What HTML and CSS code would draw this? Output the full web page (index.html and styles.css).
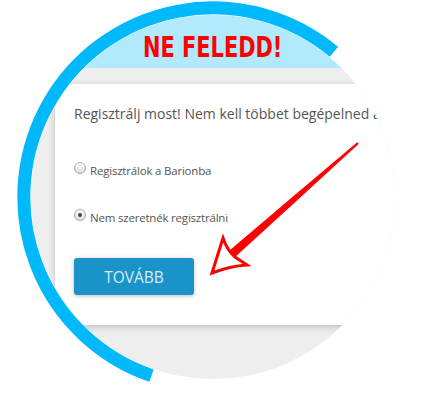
FILE: index.html
```html
<!DOCTYPE html>
<html lang="hu">
<head>
    <meta charset="UTF-8">
    <meta name="viewport" content="width=device-width, initial-scale=1.0">
    <title>Ne feledd!</title>
    <link rel="stylesheet" href="styles.css">
</head>
<body>
    <div class="stage">
        <div class="bubble">
            <div class="bubble-head"><span class="title">NE FELEDD!</span></div>
            <div class="card">
                <p class="intro">Regisztrálj most! Nem kell többet begépelned a</p>
                <label class="choice first">
                    <input type="radio" name="reg" value="yes">
                    <span>Regisztrálok a Barionba</span>
                </label>
                <label class="choice second">
                    <input type="radio" name="reg" value="no" checked>
                    <span>Nem szeretnék regisztrálni</span>
                </label>
                <button class="next-button" type="button">TOVÁBB</button>
            </div>
        </div>

        <!-- ring and hand drawn arrow sit over the bubble -->
        <svg class="overlay" width="428" height="400" viewBox="0 0 428 400">
            <path d="M 333.9 51.8 A 189 189 0 1 0 151.5 375.7" fill="none" stroke="#00b9fb" stroke-width="13"/>
            <polygon points="358.8,143.8 297.0,200.5 234.8,257.2 229.2,250.8 293.0,196.5 357.2,142.2" fill="#ff0000"/>
            <path d="M 212 273 L 223 238 Q 227 250 235 257 L 247 265 Q 230 266 212 273 Z" fill="#fff" stroke="#ff0000" stroke-width="3" stroke-linejoin="miter"/>
        </svg>
    </div>
</body>
</html>
```

FILE: styles.css
```css
body {
    margin: 0;
    background-color: #ffffff;
    font-family: "Open Sans", Lato, sans-serif;
    color: #555555;
}
.stage {
    position: relative;
    width: 428px;
    height: 400px;
    overflow: hidden;
}
.bubble {
    width: 364px;
    height: 364px;
    margin: 15px 0 0 31px;
    border-radius: 50%;
    overflow: hidden;
    background-color: #eeeeee;
    display: flex;
    flex-direction: column;
}
.bubble-head {
    height: 35px;
    padding-top: 18px;
    background-color: #b2eafd;
    color: #ff0000;
    font-family: "DejaVu Sans", sans-serif;
    font-weight: bold;
    font-size: 29px;
    line-height: 29px;
    text-align: center;
}
.title {
    display: inline-block;
    transform: scaleX(0.72);
}
.card {
    flex-shrink: 0;
    width: 380px;
    height: 241px;
    box-sizing: border-box;
    margin: 16px 0 0 24px;
    padding: 20px 20px 0 19px;
    background-color: #ffffff;
    box-shadow: 0 2px 7px rgba(0, 0, 0, 0.2);
    display: flex;
    flex-direction: column;
    align-items: flex-start;
}
.intro {
    margin: 0;
    font-size: 14px;
    line-height: 20px;
    white-space: nowrap;
}
.choice {
    display: flex;
    align-items: center;
    gap: 4px;
    height: 20px;
    font-size: 11.5px;
    letter-spacing: -0.2px;
}
.choice span {
    padding-top: 4px;
}
.choice.first {
    margin-top: 34px;
}
.choice.second {
    margin-top: 27px;
}
.choice input {
    appearance: none;
    width: 12px;
    height: 12px;
    margin: 0;
    border: 1px solid #a9a9a9;
    border-radius: 50%;
    background: linear-gradient(#ffffff, #dcdcdc);
    display: flex;
    align-items: center;
    justify-content: center;
}
.choice input:checked::after {
    content: "";
    width: 4px;
    height: 4px;
    border-radius: 50%;
    background-color: #444444;
}
.next-button {
    margin-top: 33px;
    width: 120px;
    height: 37px;
    border: none;
    border-radius: 3px;
    background-color: #1a93c9;
    color: #d6ecf7;
    font-family: "Open Sans", Lato, sans-serif;
    font-size: 15.5px;
    box-shadow: 0 1px 4px rgba(0, 0, 0, 0.25);
}
.overlay {
    position: absolute;
    left: 0;
    top: 0;
    pointer-events: none;
}
```
